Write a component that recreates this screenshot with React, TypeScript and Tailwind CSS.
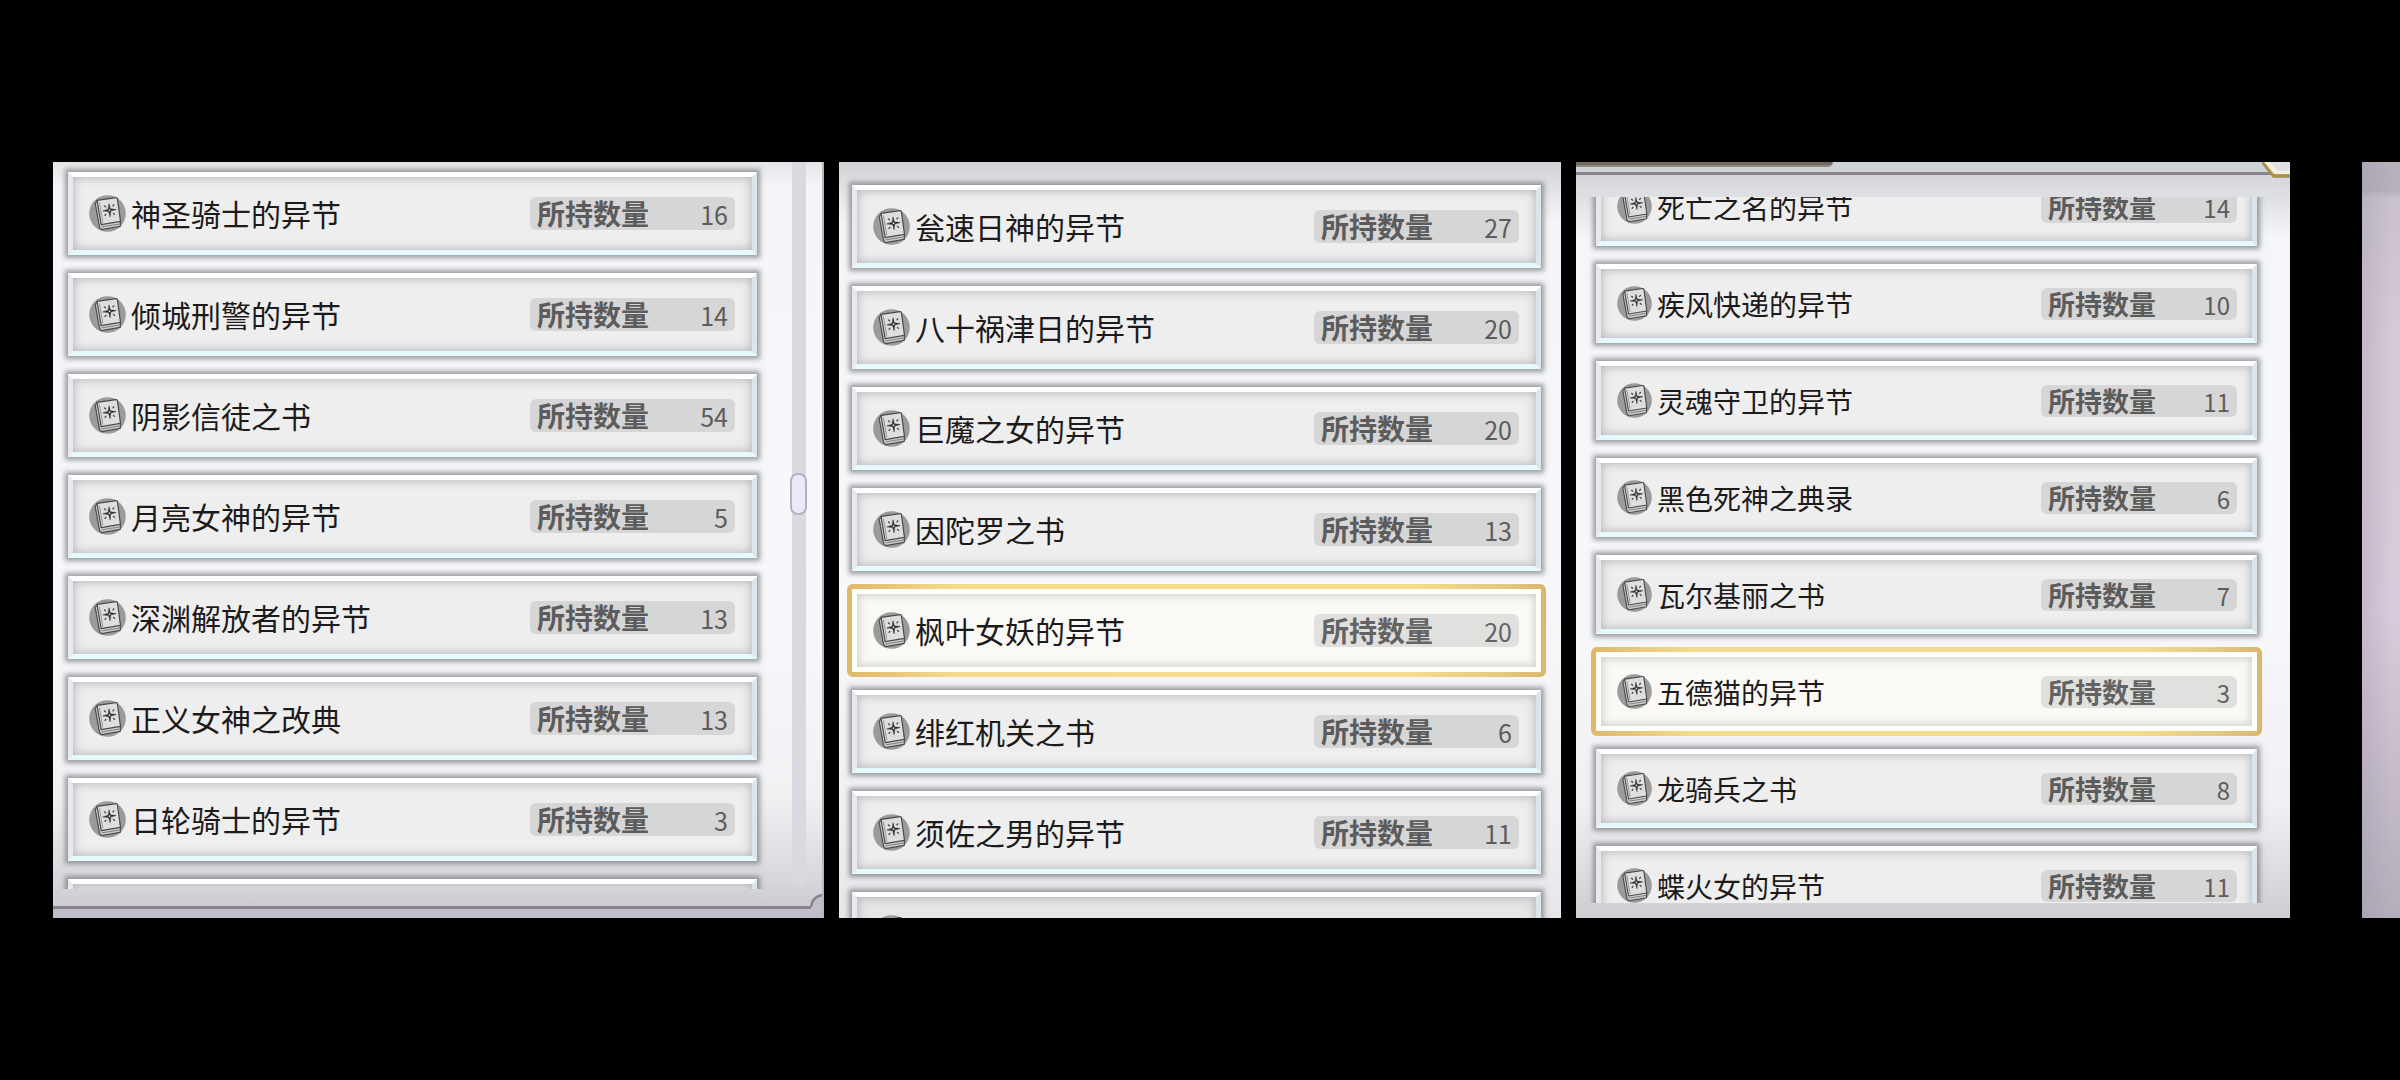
import React, { useState } from 'react';
import clsx from 'clsx';

interface Book {
  name: string;
  count: number;
}

interface BookRowProps {
  book: Book;
  selected: boolean;
  compact?: boolean;
  onSelect: () => void;
}

interface BookListProps {
  label: string;
  books: Book[];
  initial?: string;
  compact?: boolean;
  className?: string;
}

const KNIGHT_BOOKS: Book[] = [
  { name: '神圣骑士的异节', count: 16 },
  { name: '倾城刑警的异节', count: 14 },
  { name: '阴影信徒之书', count: 54 },
  { name: '月亮女神的异节', count: 5 },
  { name: '深渊解放者的异节', count: 13 },
  { name: '正义女神之改典', count: 13 },
  { name: '日轮骑士的异节', count: 3 },
];

const SHRINE_BOOKS: Book[] = [
  { name: '瓮速日神的异节', count: 27 },
  { name: '八十祸津日的异节', count: 20 },
  { name: '巨魔之女的异节', count: 20 },
  { name: '因陀罗之书', count: 13 },
  { name: '枫叶女妖的异节', count: 20 },
  { name: '绯红机关之书', count: 6 },
  { name: '须佐之男的异节', count: 11 },
];

const REAPER_BOOKS: Book[] = [
  { name: '死亡之名的异节', count: 14 },
  { name: '疾风快递的异节', count: 10 },
  { name: '灵魂守卫的异节', count: 11 },
  { name: '黑色死神之典录', count: 6 },
  { name: '瓦尔基丽之书', count: 7 },
  { name: '五德猫的异节', count: 3 },
  { name: '龙骑兵之书', count: 8 },
  { name: '蝶火女的异节', count: 11 },
];

const BookIcon: React.FC<{ className?: string }> = ({ className }) => (
  <svg viewBox="0 0 37 37" className={className} aria-hidden="true">
    <circle cx="18.5" cy="18.5" r="18.3" fill="#9b9b9b" />
    {/* spine and page block */}
    <path d="M8 6 L6.2 8.5 L10.6 32.6 L12.6 34.6 L31.2 31.4 L31.4 27 Z" fill="#cdcdcd" stroke="#4c4c4c" strokeWidth="1.2" strokeLinejoin="round" />
    <path d="M12.5 31.9 L30.6 29" stroke="#777777" strokeWidth="0.9" fill="none" />
    {/* cover */}
    <path d="M8 5.4 L27.2 2.6 Q28.2 2.5 28.4 3.6 L31.5 26.4 L12.2 29.6 Z" fill="#dedede" stroke="#4a4a4a" strokeWidth="1.2" strokeLinejoin="round" />
    <path d="M10.4 7.4 L13.8 27.4" stroke="#8d8d8d" strokeWidth="0.9" />
    {/* star emblem */}
    <path d="M20 8.8 L21.3 13.8 L27.2 14.6 L21.7 16.1 L21.1 21.8 L19.6 16.5 L13.8 15.9 L19.2 14.2 Z" fill="#2f2f2f" stroke="#2f2f2f" strokeWidth="0.5" strokeLinejoin="round" />
    <circle cx="20.5" cy="15.2" r="0.9" fill="#dedede" />
    <g stroke="#333333" strokeWidth="1.2" strokeLinecap="round">
      <path d="M15.4 10.9 L16.6 11.9" />
      <path d="M23.9 10.9 L24.8 9.8" />
      <path d="M16 20.4 L16.9 19.3" />
      <path d="M24.4 18.4 L25.6 19.4" />
    </g>
  </svg>
);

const BookRow: React.FC<BookRowProps> = ({ book, selected, compact, onSelect }) => (
  <li className="isolate shrink-0">
    <button
      type="button"
      aria-pressed={selected}
      onClick={onSelect}
      className={clsx(
        'relative flex w-full items-center border-[5px] text-left',
        compact ? 'h-[79px] pr-[15px] pl-4' : 'h-[83px] pr-[17px] pl-4',
        selected
          ? 'border-[#fffef8] bg-[#faf9f6] shadow-[inset_0_0_8px_1px_rgba(150,145,140,0.45)] before:absolute before:-inset-[10px] before:-z-10 before:rounded-md before:bg-[linear-gradient(to_right,#e0b76a_0%,#f2da8e_15%,#f4dd90_80%,#e3c880_94%,#dab56e_100%)]'
          : 'border-t-white border-r-[#dbe5ec] border-b-[#e6f9fc] border-l-[#eae8ef] bg-[#eeeeee] shadow-[0_0_5px_3px_rgba(106,108,114,0.66),inset_0_0_10px_1px_rgba(130,130,142,0.5)]'
      )}
    >
      <BookIcon className={compact ? 'size-[35px] shrink-0' : 'size-[37px] shrink-0'} />
      <span className={clsx('ml-[5px] flex-1 whitespace-nowrap leading-8 text-[#1c1a1a]', compact ? 'text-[28px]' : 'pb-0.5 text-[30px]')}>
        {book.name}
      </span>
      <span
        className={clsx(
          'flex items-baseline justify-between rounded-md px-[7px]',
          selected ? 'bg-[#e0e0de] text-[#636363]' : 'bg-[#d6d6d6] text-[#5c5c5c]',
          compact ? 'w-[196px] leading-[31px]' : 'w-[205px] leading-8'
        )}
      >
        <span className={clsx('font-bold', compact ? 'text-[27px]' : 'text-[28px]')}>所持数量</span>
        <span className={compact ? 'text-[24px]' : 'text-[25px]'}>{book.count}</span>
      </span>
    </button>
  </li>
);

const BookList: React.FC<BookListProps> = ({ label, books, initial, compact, className }) => {
  const [selected, setSelected] = useState(initial);

  return (
    <ul aria-label={label} className={clsx('flex flex-col gap-[18px]', className)}>
      {books.map((book) => (
        <BookRow
          key={book.name}
          book={book}
          compact={compact}
          selected={book.name === selected}
          onSelect={() => setSelected(book.name)}
        />
      ))}
      {/* top edge of the next row in the scroll area */}
      {!compact && (
        <li aria-hidden="true" className="h-[83px] shrink-0 border-[5px] border-t-white border-r-[#dbe5ec] border-b-[#e6f9fc] border-l-[#eae8ef] bg-[#e6e6e7] pt-[18px] pl-4 shadow-[0_0_5px_3px_rgba(106,108,114,0.66),inset_0_0_10px_1px_rgba(130,130,142,0.5)]">
          <BookIcon className="size-[37px]" />
        </li>
      )}
    </ul>
  );
};

const App: React.FC = () => {
  return (
    <main
      lang="zh-CN"
      className="grid h-screen grid-cols-[771fr_737fr_729fr_110fr] grid-rows-1 overflow-hidden bg-black py-[15vh] pl-[53px] font-['Noto_Sans_CJK_SC',sans-serif]"
    >
      <section className="relative flex min-h-0 min-w-0 flex-col overflow-hidden border-r-2 border-[#b9b6c2] bg-[linear-gradient(to_bottom,#e4e5e6_0px,#f4f5f9_24px,#f7f8fb_60%,#f1f1f4_84%,#dcdce0_93%,#c9c7ce_100%)]">
        <div className="flex min-h-0 flex-1">
          <div className="min-w-0 flex-1 overflow-hidden pt-[10px] pr-[10px] pl-[15px]">
            <BookList label="骑士" books={KNIGHT_BOOKS} />
          </div>
          <div role="scrollbar" aria-valuenow={43} className="relative mr-4 mb-[3px] ml-[25px] w-[14px] rounded-b-md bg-[#dad8e0]">
            <div className="absolute top-[43%] -right-px -left-[2px] h-[42px] rounded-lg border-2 border-[#b5b1be] bg-[#ece8fa]" />
          </div>
        </div>
        <div className="mt-[17px] h-3 border-t-[3px] border-[#87828e] bg-[#c1bdca]" />
        <svg viewBox="0 0 12 16" className="absolute right-0 bottom-[8px] h-4 w-3" aria-hidden="true">
          <path d="M12 1 Q2 3 1 13 L1 16 L12 16 Z" fill="#c1bdca" />
          <path d="M12 1 Q2 3 1 13" fill="none" stroke="#87828e" strokeWidth="2.4" />
        </svg>
      </section>

      <section className="ml-[15px] min-h-0 min-w-0 overflow-hidden bg-[linear-gradient(to_bottom,#d2d3d6_0px,#dcdde1_18px,#f4f5f9_60px,#f7f8fb_60%,#f0eef2_88%,#e6e5e9_100%)] pt-[23px] pr-5 pl-[13px]">
        <BookList label="神社" books={SHRINE_BOOKS} initial="枫叶女妖的异节" />
      </section>

      <section className="relative ml-[15px] flex min-h-0 min-w-0 flex-col overflow-hidden bg-[linear-gradient(to_bottom,#cfd0d5_0px,#dfe0e4_35px,#f5f6fa_75px,#f7f8fb_60%,#f0eff3_85%,#d3d2d7_98%,#cfced3_100%)]">
        <div className="h-[13px] shrink-0 border-b-[3px] border-[#8a848f] bg-[#d0d4d9]">
          <div className="h-[5px] w-[36%] rounded-br-lg border-b-2 border-[#8f8878] bg-[#6f695f]" />
        </div>
        <svg viewBox="0 0 28 17" className="absolute top-0 right-0 h-[17px] w-7" aria-hidden="true">
          <path d="M0 0 L11 14.5 L28 14.5 L28 0 Z" fill="#b39a56" />
          <path d="M2 0 L12 12 L28 12 L28 0 Z" fill="#f5f1dc" />
          <path d="M8 0 L16 9 L28 9 L28 0 Z" fill="#dfe2e3" />
          <path d="M0 0 L11.5 14.5 L28 14.5" fill="none" stroke="#a88f4d" strokeWidth="2.4" />
        </svg>
        <div className="mt-[22px] mb-[15px] min-h-0 flex-1 overflow-hidden pr-[33px] pl-5">
          <BookList label="死神" books={REAPER_BOOKS} initial="五德猫的异节" compact className="-mt-[30px]" />
        </div>
      </section>

      <aside className="ml-[72px] bg-[linear-gradient(to_right,rgba(150,145,165,0.3),transparent_80%),linear-gradient(to_bottom,#b6b1bb_0px,#b6b0bb_28px,#c9c1cc_36px,#d6c8d6_22%,#d8cbdb_60%,#b5adba_100%)]" />
    </main>
  );
};

export default App;
